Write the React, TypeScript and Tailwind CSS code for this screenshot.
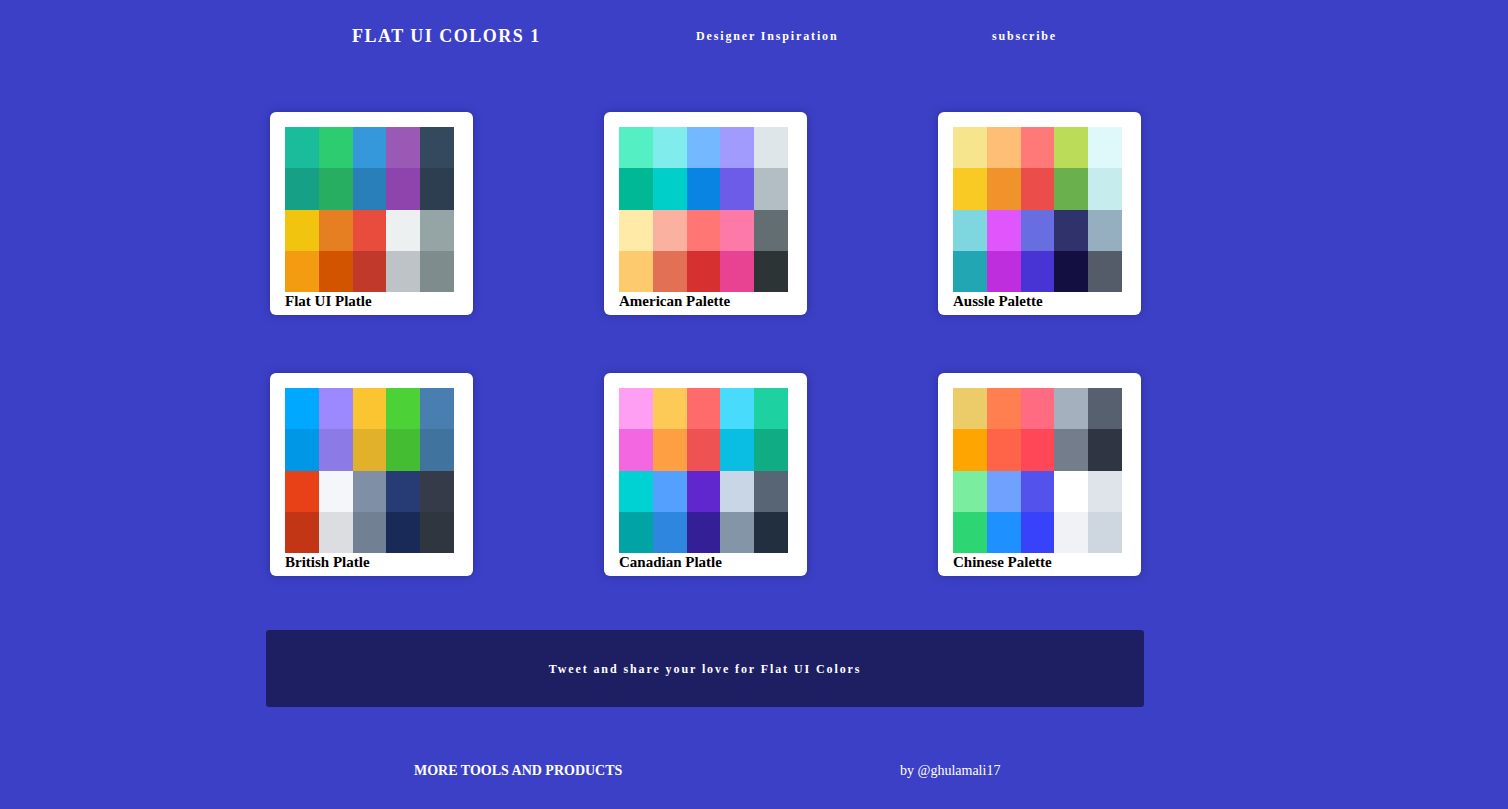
const palettes: { name: string; colors: string[] }[] = [
  {
    name: "Flat UI Platle",
    colors: [
      "#1abc9c", "#2ecc71", "#3498db", "#9b59b6", "#34495e",
      "#16a085", "#27ae60", "#2980b9", "#8e44ad", "#2c3e50",
      "#f1c40f", "#e67e22", "#e74c3c", "#ecf0f1", "#95a5a6",
      "#f39c12", "#d35400", "#c0392b", "#bdc3c7", "#7f8c8d",
    ],
  },
  {
    name: "American Palette",
    colors: [
      "#55efc4", "#81ecec", "#74b9ff", "#a29bfe", "#dfe6e9",
      "#00b894", "#00cec9", "#0984e3", "#6c5ce7", "#b2bec3",
      "#ffeaa7", "#fab1a0", "#ff7675", "#fd79a8", "#636e72",
      "#fdcb6e", "#e17055", "#d63031", "#e84393", "#2d3436",
    ],
  },
  {
    name: "Aussle Palette",
    colors: [
      "#f6e58d", "#ffbe76", "#ff7979", "#badc58", "#dff9fb",
      "#f9ca24", "#f0932b", "#eb4d4b", "#6ab04c", "#c7ecee",
      "#7ed6df", "#e056fd", "#686de0", "#30336b", "#95afc0",
      "#22a6b3", "#be2edd", "#4834d4", "#130f40", "#535c68",
    ],
  },
  {
    name: "British Platle",
    colors: [
      "#00a8ff", "#9c88ff", "#fbc531", "#4cd137", "#487eb0",
      "#0097e6", "#8c7ae6", "#e1b12c", "#44bd32", "#40739e",
      "#e84118", "#f5f6fa", "#7f8fa6", "#273c75", "#353b48",
      "#c23616", "#dcdde1", "#718093", "#192a56", "#2f3640",
    ],
  },
  {
    name: "Canadian Platle",
    colors: [
      "#ff9ff3", "#feca57", "#ff6b6b", "#48dbfb", "#1dd1a1",
      "#f368e0", "#ff9f43", "#ee5253", "#0abde3", "#10ac84",
      "#00d2d3", "#54a0ff", "#5f27cd", "#c8d6e5", "#576574",
      "#01a3a4", "#2e86de", "#341f97", "#8395a7", "#222f3e",
    ],
  },
  {
    name: "Chinese Palette",
    colors: [
      "#eccc68", "#ff7f50", "#ff6b81", "#a4b0be", "#57606f",
      "#ffa502", "#ff6348", "#ff4757", "#747d8c", "#2f3542",
      "#7bed9f", "#70a1ff", "#5352ed", "#ffffff", "#dfe4ea",
      "#2ed573", "#1e90ff", "#3742fa", "#f1f2f6", "#ced6e0",
    ],
  },
];

const PaletteCard = ({ name, colors }: { name: string; colors: string[] }) => {
  return (
    <div className="w-[203px] h-[203px] bg-white rounded-[6px] pt-[15px] pl-[15px] shadow-[0_0_10px_rgba(20,20,80,0.35)]">
      <div className="grid grid-cols-5 grid-rows-4 w-[169px] h-[165px]">
        {colors.map((c, i) => (
          <div key={i} style={{ backgroundColor: c }} />
        ))}
      </div>
      <p className="text-[15px] leading-[18px] font-bold text-black">{name}</p>
    </div>
  );
};

export default function App() {
  return (
    <div className="min-h-screen bg-[#3c40c6] text-white font-['Liberation_Serif',serif]">
      {/* Header */}
      <header className="w-[878px] ml-[266px] h-[72px] flex items-center pl-[86px]">
        <a className="w-[344px] text-[18px] font-bold tracking-[1.5px]">FLAT UI COLORS 1</a>
        <a className="w-[296px] text-[12px] font-bold tracking-[1.85px]">Designer Inspiration</a>
        <a className="text-[12px] font-bold tracking-[1.8px]">subscribe</a>
      </header>

      {/* Palettes */}
      <main className="w-[878px] ml-[266px] pt-[40px]">
        <div className="flex flex-wrap gap-x-[131px] gap-y-[58px] pl-[4px]">
          {palettes.map((p) => (
            <PaletteCard key={p.name} name={p.name} colors={p.colors} />
          ))}
        </div>

        <div className="mt-[54px] h-[77px] bg-[#1e1f63] rounded-[3px] flex items-center justify-center">
          <p className="text-[12px] font-bold tracking-[1.9px]">Tweet and share your love for Flat UI Colors</p>
        </div>
      </main>

      {/* Footer */}
      <footer className="w-[878px] ml-[266px] mt-[52px] h-[22px] flex items-center pl-[148px] pb-[30px] box-content">
        <a className="w-[486px] text-[14px] font-bold">MORE TOOLS AND PRODUCTS</a>
        <span className="text-[14px]">by @ghulamali17</span>
      </footer>
    </div>
  );
}
